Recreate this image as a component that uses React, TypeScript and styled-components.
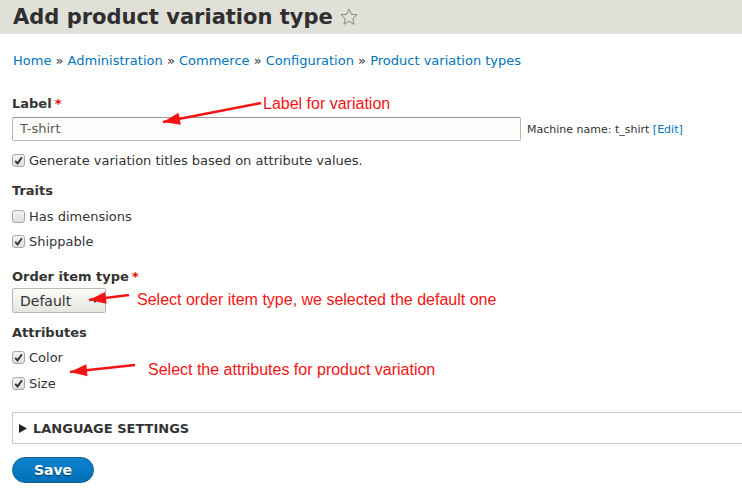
import React from 'react';
import styled, { createGlobalStyle } from 'styled-components';

const GlobalStyle = createGlobalStyle`
  html, body {
    margin: 0;
    padding: 0;
    background: #fff;
    overflow: hidden;
  }
  body {
    font-family: "DejaVu Sans", Verdana, sans-serif;
    font-size: 13px;
    color: #333;
  }
  * {
    box-sizing: border-box;
  }
`;

type Arrow = { x1: number; y1: number; x2: number; y2: number };

const annotations: { text: string; left: number; top: number; arrow: Arrow }[] = [
  { text: 'Label for variation', left: 263, top: 94, arrow: { x1: 261, y1: 103, x2: 163, y2: 122 } },
  {
    text: 'Select order item type, we selected the default one',
    left: 137,
    top: 290,
    arrow: { x1: 129, y1: 295, x2: 89, y2: 300 },
  },
  {
    text: 'Select the attributes for product variation',
    left: 148,
    top: 360,
    arrow: { x1: 135, y1: 365, x2: 70, y2: 372 },
  },
];

const Page = styled.div`
  position: relative;
  width: 742px;
  height: 493px;
  overflow: hidden;
`;

const Header = styled.header`
  display: flex;
  align-items: center;
  gap: 6px;
  height: 34px;
  padding: 0 13px;
  background: #e0e0d8;
`;

const Title = styled.h1`
  margin: 0;
  font-size: 21px;
  font-weight: bold;
  line-height: 34px;
  color: #2f2f2f;
`;

const Content = styled.main`
  padding: 18px 0 0 12px;
`;

const Breadcrumb = styled.nav`
  margin-left: 1px;
  line-height: 18px;
  color: #333;
  a {
    color: #0074bd;
    text-decoration: none;
  }
`;

const FormItem = styled.div<{ $mt: number }>`
  margin-top: ${(p) => p.$mt}px;
`;

const Label = styled.div<{ $mb: number }>`
  font-weight: bold;
  line-height: 18px;
  margin-bottom: ${(p) => p.$mb}px;
`;

const Required = styled.span`
  color: #e00c00;
  margin-left: 3px;
`;

const InlineRow = styled.div`
  display: flex;
  align-items: center;
  gap: 6px;
`;

const TextInput = styled.div`
  width: 509px;
  height: 24px;
  padding: 0 7px;
  line-height: 22px;
  border: 1px solid #b8b8b8;
  border-top-color: #999;
  border-radius: 2px;
  background: #fcfcfa;
  color: #595959;
`;

const MachineName = styled.span`
  font-size: 11px;
  color: #333;
  a {
    color: #0074bd;
    text-decoration: none;
  }
`;

const CheckRow = styled.div<{ $mt: number }>`
  display: flex;
  align-items: center;
  gap: 4px;
  height: 18px;
  margin-top: ${(p) => p.$mt}px;
`;

const Box = styled.span`
  display: inline-flex;
  align-items: center;
  justify-content: center;
  width: 13px;
  height: 13px;
  border: 1px solid #a8a8a8;
  border-radius: 3px;
  background: linear-gradient(#f4f4f4, #dedede);
`;

const Heading = styled.div<{ $mt: number }>`
  font-weight: bold;
  line-height: 18px;
  margin-top: ${(p) => p.$mt}px;
`;

const Select = styled.div`
  display: flex;
  align-items: center;
  justify-content: space-between;
  width: 94px;
  height: 25px;
  padding: 0 6px 0 7px;
  border: 1px solid #b8b8b8;
  border-radius: 2px;
  background: linear-gradient(#fbfbf8, #e6e6df);
  font-size: 14px;
  color: #333;
`;

const Details = styled.div`
  display: flex;
  align-items: center;
  gap: 6px;
  height: 32px;
  margin: 20px -4px 0 0;
  padding-left: 6px;
  border: 1px solid #ccc;
  font-weight: bold;
  text-transform: uppercase;
`;

const SaveButton = styled.button`
  margin-top: 13px;
  width: 82px;
  height: 26px;
  border: 1px solid #1e5c90;
  border-radius: 20px;
  background: linear-gradient(#0c83cc, #0071b8);
  color: #fff;
  font-family: inherit;
  font-size: 14px;
  font-weight: bold;
  text-shadow: 0 1px 1px rgba(0, 0, 0, 0.5);
`;

const Overlay = styled.svg`
  position: absolute;
  left: 0;
  top: 0;
  pointer-events: none;
`;

const Note = styled.div<{ $left: number; $top: number }>`
  position: absolute;
  left: ${(p) => p.$left}px;
  top: ${(p) => p.$top}px;
  font-family: "Liberation Sans", Arial, sans-serif;
  font-size: 16px;
  line-height: 19px;
  color: #f41414;
  white-space: nowrap;
`;

const Check = ({ checked }: { checked: boolean }) => (
  <Box>
    {checked && (
      <svg width="9" height="9" viewBox="0 0 9 9">
        <path d="M1.2 4.8 L3.6 7.4 L7.9 1.2" fill="none" stroke="#333" strokeWidth="1.9" />
      </svg>
    )}
  </Box>
);

const arrowHead = ({ x1, y1, x2, y2 }: Arrow) => {
  const a = Math.atan2(y1 - y2, x1 - x2);
  const len = 17;
  const w = 6;
  const bx = x2 + Math.cos(a) * len;
  const by = y2 + Math.sin(a) * len;
  const px = -Math.sin(a) * w;
  const py = Math.cos(a) * w;
  return `${x2},${y2} ${bx + px},${by + py} ${bx - px},${by - py}`;
};

const App = () => {
  return (
    <>
      <GlobalStyle />
      <Page>
        <Header>
          <Title>Add product variation type</Title>
          <svg width="20" height="20" viewBox="0 0 24 24">
            <path
              d="M12 2.5l2.8 6.3 6.9.6-5.2 4.6 1.6 6.8L12 17.2l-6.1 3.6 1.6-6.8-5.2-4.6 6.9-.6z"
              fill="none"
              stroke="#8a8a80"
              strokeWidth="1.2"
              strokeLinejoin="round"
            />
          </svg>
        </Header>
        <Content>
          <Breadcrumb>
            <a href="#">Home</a> » <a href="#">Administration</a> » <a href="#">Commerce</a> »{' '}
            <a href="#">Configuration</a> » <a href="#">Product variation types</a>
          </Breadcrumb>

          <FormItem $mt={25}>
            <Label $mb={4}>
              Label<Required>*</Required>
            </Label>
            <InlineRow>
              <TextInput>T-shirt</TextInput>
              <MachineName>
                Machine name: t_shirt <a href="#">[Edit]</a>
              </MachineName>
            </InlineRow>
          </FormItem>

          <CheckRow $mt={10}>
            <Check checked />
            Generate variation titles based on attribute values.
          </CheckRow>

          <Heading $mt={13}>Traits</Heading>
          <CheckRow $mt={7}>
            <Check checked={false} />
            Has dimensions
          </CheckRow>
          <CheckRow $mt={7}>
            <Check checked />
            Shippable
          </CheckRow>

          <FormItem $mt={18}>
            <Label $mb={2}>
              Order item type<Required>*</Required>
            </Label>
            <Select>
              Default
              <svg width="8" height="5" viewBox="0 0 8 5">
                <path d="M0 0h8L4 5z" fill="#333" />
              </svg>
            </Select>
          </FormItem>

          <Heading $mt={11}>Attributes</Heading>
          <CheckRow $mt={6}>
            <Check checked />
            Color
          </CheckRow>
          <CheckRow $mt={8}>
            <Check checked />
            Size
          </CheckRow>

          <Details>
            <svg width="8" height="9" viewBox="0 0 8 9">
              <path d="M0 0l8 4.5L0 9z" fill="#222" />
            </svg>
            Language settings
          </Details>

          <SaveButton>Save</SaveButton>
        </Content>

        <Overlay width="742" height="493">
          {annotations.map((n, i) => (
            <g key={i}>
              <line
                x1={n.arrow.x1}
                y1={n.arrow.y1}
                x2={n.arrow.x2}
                y2={n.arrow.y2}
                stroke="#f41414"
                strokeWidth="2.5"
              />
              <polygon points={arrowHead(n.arrow)} fill="#f41414" />
            </g>
          ))}
        </Overlay>
        {annotations.map((n, i) => (
          <Note key={i} $left={n.left} $top={n.top}>
            {n.text}
          </Note>
        ))}
      </Page>
    </>
  );
};

export default App;
